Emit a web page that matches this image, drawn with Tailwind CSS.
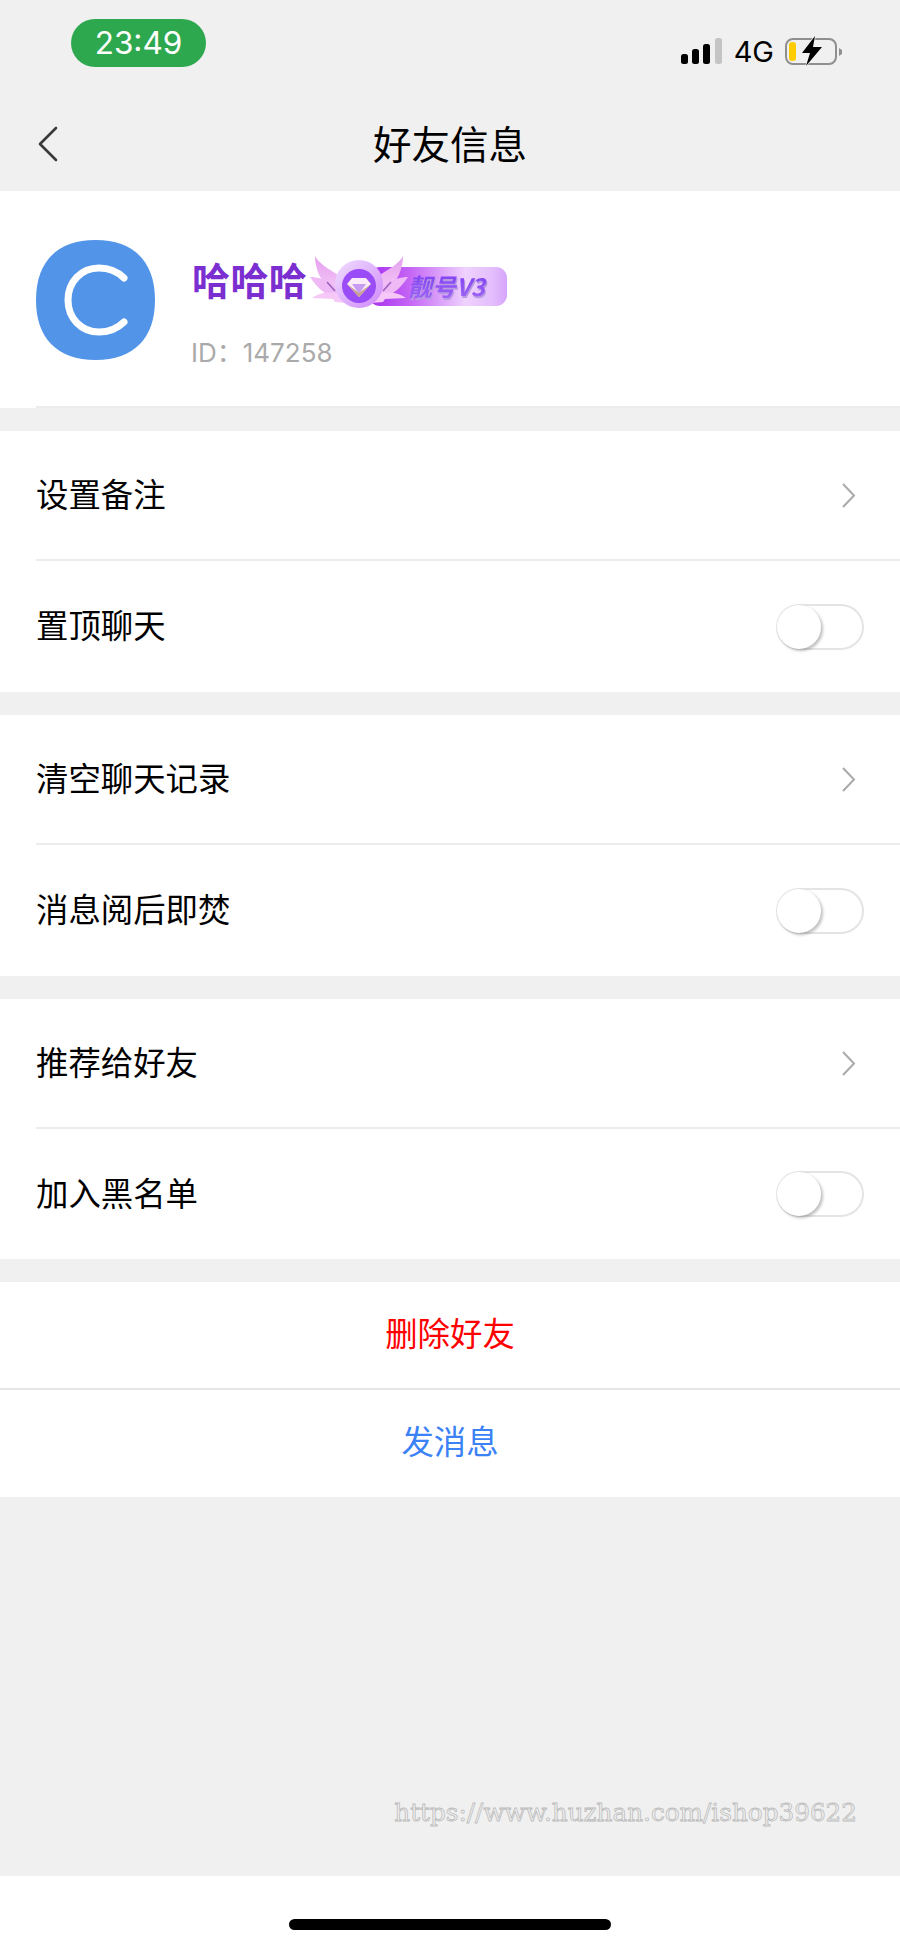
<!DOCTYPE html>
<html lang="zh">
<head>
<meta charset="utf-8">
<script src="https://cdn.jsdelivr.net/npm/@tailwindcss/browser@4"></script>
</head>
<body class="m-0 bg-[#f0f0f0] font-['Inter','Noto_Sans_CJK_SC',sans-serif]">
<div class="w-[900px] h-[1947px] flex flex-col overflow-hidden bg-[#f0f0f0] text-black">

  <!-- Status bar -->
  <div class="h-[100px] shrink-0 flex items-start justify-between pl-[71px] pr-[57px]">
    <div class="mt-[19px] w-[135px] h-[48px] rounded-[24px] bg-[#2ea84f] flex items-center justify-center text-white text-[31.5px] leading-none">23:49</div>
    <div class="mt-[36px] flex items-center">
      <svg width="42" height="26" viewBox="0 0 42 26"><rect x="0" y="16" width="7" height="10" rx="2.5" fill="#000"/><rect x="11" y="11" width="7" height="15" rx="2.5" fill="#000"/><rect x="22" y="6" width="7" height="20" rx="2.5" fill="#000"/><rect x="34" y="0" width="7" height="26" rx="2.5" fill="#c4c4c4"/></svg>
      <span class="ml-[11px] text-[29px] leading-none">4G</span>
      <svg class="ml-[11px]" width="58" height="30" viewBox="0 0 58 30"><rect x="1" y="3" width="50" height="25" rx="7" fill="none" stroke="#8f8f8f" stroke-width="2"/><path d="M54 12 l3 2 v4 l-3 2z" fill="#8f8f8f"/><rect x="4" y="6" width="7" height="19" rx="3" fill="#ffcc00"/><path d="M30 0 L17 17 H25 L21 30 L37 11 H28 Z" fill="#000" stroke="#f0f0f0" stroke-width="1.5" paint-order="stroke"/></svg>
    </div>
  </div>

  <!-- Nav bar -->
  <div class="relative h-[91px] shrink-0 flex items-center justify-center">
    <svg class="absolute left-[37px] top-[26px]" width="22" height="36" viewBox="0 0 22 36"><path d="M19 2 L3 18 L19 34" fill="none" stroke="#3a3a3a" stroke-width="2.6" stroke-linecap="round" stroke-linejoin="round"/></svg>
    <span class="text-[38.5px] leading-none">好友信息</span>
  </div>

  <!-- Profile -->
  <div class="bg-white h-[217px] shrink-0 flex flex-col">
    <div class="h-[215px] flex pl-[36px]">
      <svg class="mt-[49px]" width="119" height="120" viewBox="0 0 119 120">
        <path d="M59.5 0 C98 0 119 22 119 60 C119 98 98 120 59.5 120 C21 120 0 98 0 60 C0 22 21 0 59.5 0Z" fill="#5295e8"/>
        <path d="M88 38 C81 31 72 28 63 28 C45 28 32 42 32 60 C32 78 45 92 63 92 C72 92 81 89 88 82" fill="none" stroke="#fff" stroke-width="7" stroke-linecap="round"/>
      </svg>
      <div class="ml-[37px] flex flex-col">
        <div class="relative mt-[66px] h-[48px] flex items-center">
          <span class="text-[38px] leading-none font-bold tracking-[0.4px] text-[#7b2fd0]">哈哈哈</span>
          <!-- Badge -->
          <svg class="absolute left-[117px] top-[-2px]" width="199" height="56" viewBox="0 0 199 56">
            <defs>
              <linearGradient id="bar" x1="0" x2="1" y1="0" y2="0"><stop offset="0" stop-color="#a52ef0"/><stop offset="0.3" stop-color="#c566f5"/><stop offset="0.7" stop-color="#efd2fe"/><stop offset="0.9" stop-color="#e3bdfc"/><stop offset="1" stop-color="#d6a4fb"/></linearGradient>
              <linearGradient id="wing" x1="0" x2="0" y1="0" y2="1"><stop offset="0" stop-color="#e49fee"/><stop offset="1" stop-color="#f7cdf9"/></linearGradient>
              <linearGradient id="disc" x1="0" x2="1" y1="0" y2="1"><stop offset="0" stop-color="#f0defe"/><stop offset="1" stop-color="#cf88fa"/></linearGradient>
              <linearGradient id="txt" x1="0" x2="0" y1="0" y2="1"><stop offset="0" stop-color="#7a3af0"/><stop offset="1" stop-color="#a36af6"/></linearGradient>
            </defs>
            <rect x="60" y="12" width="138" height="39" rx="11" fill="url(#bar)"/>
            <!-- left wing -->
            <path d="M6 1 C9 8 20 14 32 22 L40 40 L22 34 C12 28 6 14 6 1Z" fill="url(#wing)"/>
            <path d="M1 22 C8 22 16 24 24 30 L38 42 L16 38 C10 34 5 28 1 22Z" fill="#eeb9f4"/>
            <path d="M3 43 C12 37 22 36 36 40 L38 48 L26 47 L24 44 Z" fill="#f6c8f8"/>
            <path d="M18 27 L26 36" stroke="#9a5fc0" stroke-width="1.5" fill="none"/>
            <!-- right wing -->
            <path d="M94 1 C91 8 80 14 68 22 L60 40 L78 34 C88 28 94 14 94 1Z" fill="url(#wing)"/>
            <path d="M99 22 C92 22 84 24 76 30 L62 42 L84 38 C90 34 95 28 99 22Z" fill="#eeb9f4"/>
            <path d="M97 43 C88 37 78 36 64 40 L62 48 L74 47 L76 44 Z" fill="#f6c8f8"/>
            <path d="M82 27 L74 36" stroke="#9a5fc0" stroke-width="1.5" fill="none"/>
            <!-- medallion -->
            <circle cx="50" cy="29" r="24" fill="url(#disc)"/>
            <circle cx="50" cy="31" r="17" fill="#9a4cf6"/>
            <path d="M43 23 H57 L62 29 L50 42 L38 29Z" fill="#fbeaf8"/>
            <path d="M50 39 L43 29 H57Z" fill="#c89cf3"/>
            <path d="M38 29 L50 42 L62 29 L50 38Z" fill="#c9a28f"/>
            <text x="99" y="41" font-family="Noto Sans CJK SC" font-size="24" font-weight="700" font-style="italic" fill="url(#txt)" class="drop-shadow-[1px_2px_0_#b79ae0]">靓号V3</text>
          </svg>
        </div>
        <span class="-ml-[1px] mt-[35px] text-[26px] leading-none text-[#aaaaaa]">ID：147258</span>
      </div>
    </div>
    <div class="ml-[36px] h-[2px] bg-[#ececec]"></div>
  </div>

  <!-- Section 1 -->
  <div class="mt-[23px] bg-white shrink-0 flex flex-col">
    <div class="h-[128px] flex items-center justify-between pl-[36px] pr-[44px]">
      <span class="mt-[2px] text-[32.4px] leading-none">设置备注</span>
      <svg width="14" height="25" viewBox="0 0 14 25"><path d="M1 1 L12 12.5 L1 24" fill="none" stroke="#aaaaaa" stroke-width="2"/></svg>
    </div>
    <div class="ml-[36px] h-[2px] bg-[#ececec]"></div>
    <div class="h-[131px] flex items-center justify-between pl-[36px] pr-[36px]">
      <span class="mt-[2px] text-[32.4px] leading-none">置顶聊天</span>
      <div class="relative w-[88px] h-[46px] rounded-full border-2 border-[#e4e4e4] bg-white">
        <div class="absolute -left-[1px] -top-[1px] w-[44px] h-[44px] rounded-full bg-white shadow-[2px_2px_3px_rgba(0,0,0,0.25)]"></div>
      </div>
    </div>
  </div>

  <!-- Section 2 -->
  <div class="mt-[23px] bg-white shrink-0 flex flex-col">
    <div class="h-[128px] flex items-center justify-between pl-[36px] pr-[44px]">
      <span class="mt-[2px] text-[32.4px] leading-none">清空聊天记录</span>
      <svg width="14" height="25" viewBox="0 0 14 25"><path d="M1 1 L12 12.5 L1 24" fill="none" stroke="#aaaaaa" stroke-width="2"/></svg>
    </div>
    <div class="ml-[36px] h-[2px] bg-[#ececec]"></div>
    <div class="h-[131px] flex items-center justify-between pl-[36px] pr-[36px]">
      <span class="mt-[2px] text-[32.4px] leading-none">消息阅后即焚</span>
      <div class="relative w-[88px] h-[46px] rounded-full border-2 border-[#e4e4e4] bg-white">
        <div class="absolute -left-[1px] -top-[1px] w-[44px] h-[44px] rounded-full bg-white shadow-[2px_2px_3px_rgba(0,0,0,0.25)]"></div>
      </div>
    </div>
  </div>

  <!-- Section 3 -->
  <div class="mt-[23px] bg-white shrink-0 flex flex-col">
    <div class="h-[128px] flex items-center justify-between pl-[36px] pr-[44px]">
      <span class="mt-[2px] text-[32.4px] leading-none">推荐给好友</span>
      <svg width="14" height="25" viewBox="0 0 14 25"><path d="M1 1 L12 12.5 L1 24" fill="none" stroke="#aaaaaa" stroke-width="2"/></svg>
    </div>
    <div class="ml-[36px] h-[2px] bg-[#ececec]"></div>
    <div class="h-[130px] flex items-center justify-between pl-[36px] pr-[36px]">
      <span class="mt-[2px] text-[32.4px] leading-none">加入黑名单</span>
      <div class="relative w-[88px] h-[46px] rounded-full border-2 border-[#e4e4e4] bg-white">
        <div class="absolute -left-[1px] -top-[1px] w-[44px] h-[44px] rounded-full bg-white shadow-[2px_2px_3px_rgba(0,0,0,0.25)]"></div>
      </div>
    </div>
  </div>

  <!-- Actions -->
  <div class="mt-[23px] bg-white shrink-0 flex flex-col">
    <div class="h-[106px] flex items-center justify-center pt-[1px] text-[32.4px] leading-none text-[#ff0000]">删除好友</div>
    <div class="h-[2px] bg-[#e6e6e6]"></div>
    <div class="h-[107px] flex items-center justify-center text-[32.4px] leading-none text-[#3b82f6]">发消息</div>
  </div>

  <!-- Empty area with watermark -->
  <div class="flex-1 flex items-start justify-end pt-[304px] pr-[43px]">
    <span class="font-['DejaVu_Serif',serif] text-[24.7px] leading-none text-transparent [-webkit-text-stroke:0.8px_#bcbcbc]">https://www.huzhan.com/ishop39622</span>
  </div>

  <!-- Home indicator -->
  <div class="h-[71px] shrink-0 bg-white flex justify-center pt-[43px]">
    <div class="w-[322px] h-[11px] rounded-full bg-black"></div>
  </div>
</div>
</body>
</html>
